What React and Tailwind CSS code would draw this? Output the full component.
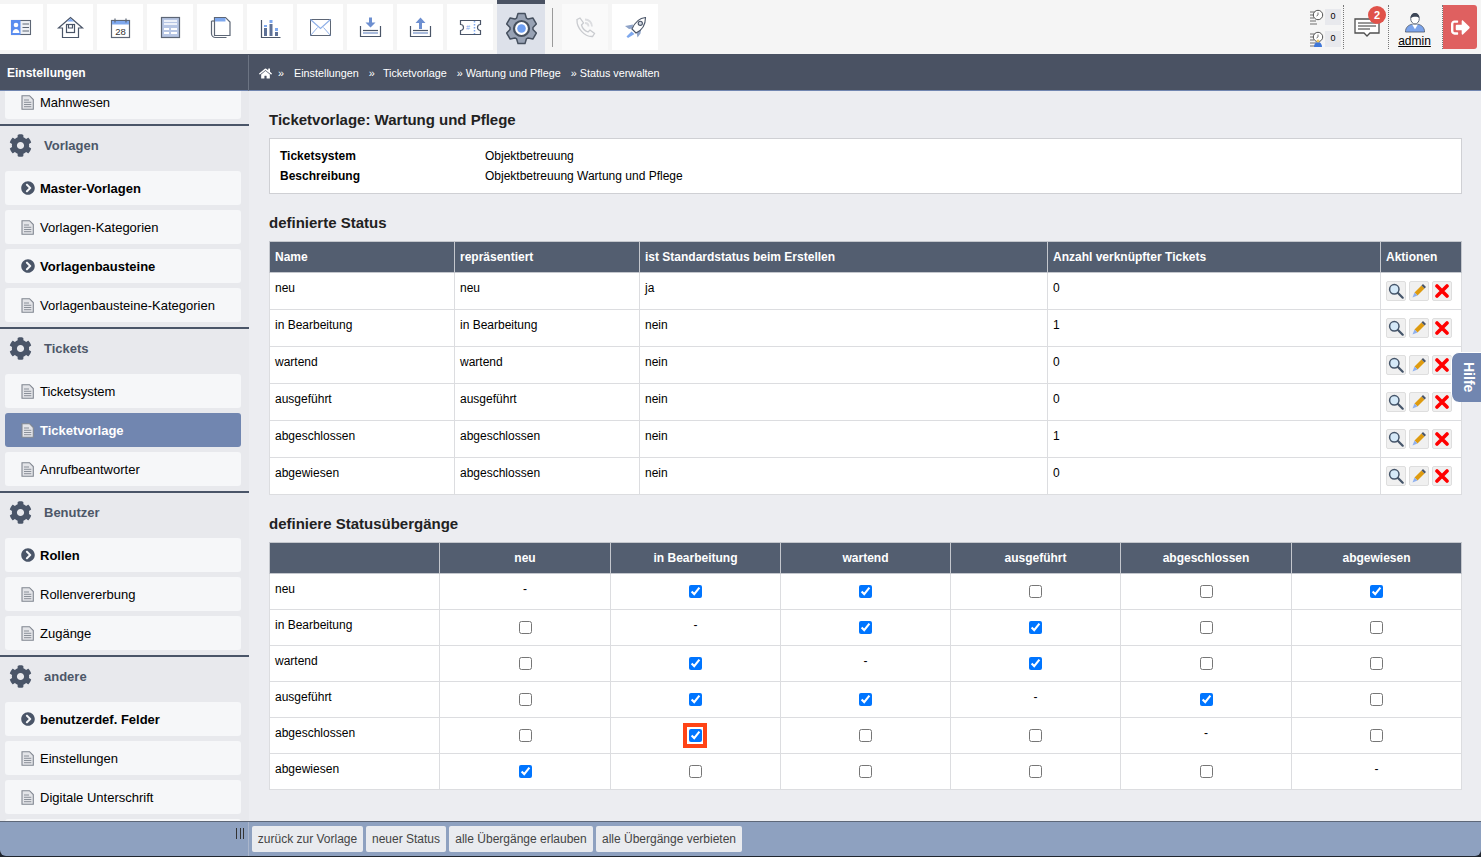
import { FaCog, FaHome, FaChevronCircleRight, FaSignOutAlt } from 'react-icons/fa';

const D = '#4a5568';
const B = '#7ea8ee';

// outline for the big settings gear, six teeth
const gearPath = () => {
  const pts = [];
  for (let k = 0; k < 6; k++) {
    const a = -90 + k * 60;
    [[a - 25, 11.5], [a - 13, 15.5], [a + 13, 15.5], [a + 25, 11.5]].forEach(([deg, r]) => {
      const t = (deg * Math.PI) / 180;
      pts.push(`${(24.5 + r * Math.cos(t)).toFixed(2)} ${(24.5 + r * Math.sin(t)).toFixed(2)}`);
    });
  }
  return `M${pts.join('L')}z`;
};

// toolbar icons
const CardIcon = () => (
  <svg width="46" height="46" viewBox="0 0 46 46" fill="none" stroke="#5d6675" strokeWidth="1.1">
    <rect x="14.500" y="16.500" width="19" height="14" fill="#eef0f4" />
    <rect x="14" y="16" width="9.500" height="15" fill="#5b8def" stroke="none" />
    <circle cx="19" cy="21" r="2.300" fill="#fff" stroke="none" />
    <path d="M15.500 29c.3-3 2-4 3.500-4s3.200 1 3.500 4z" fill="#fff" stroke="none" />
    <path d="M25.500 20h6.500M25.500 23.500h6.500M25.500 27h6.500" />
  </svg>
);
const HouseIcon = () => (
  <svg width="46" height="46" viewBox="0 0 46 46" fill="none" stroke={D} strokeWidth="1.200">
    <path d="M11.500 24L23.500 13.500 35.500 24h-4v9.500h-16V24z" fill="#fff" />
    <path d="M20 17.500l3.500-3 3.500 3z" fill={B} stroke="none" />
    <rect x="19.500" y="20.500" width="8" height="8" />
    <path d="M21.500 20.500v3.500h4v-3.500" />
  </svg>
);
const CalendarIcon = () => (
  <svg width="46" height="46" viewBox="0 0 46 46" fill="none" stroke="#5d6675" strokeWidth="1.200">
    <rect x="14.500" y="16.500" width="18" height="17" fill="#fff" />
    <rect x="15" y="17" width="17" height="3.500" fill={B} stroke="none" />
    <path d="M18 14.500v4M29 14.500v4" />
    <text x="23.500" y="30.500" textAnchor="middle" fontSize="9.500" fill="#333" stroke="none" fontFamily="Liberation Sans, sans-serif">28</text>
  </svg>
);
const FormIcon = () => (
  <svg width="46" height="46" viewBox="0 0 46 46" fill="none" stroke="#5d6675" strokeWidth="1.200">
    <rect x="14.500" y="13.500" width="18" height="20" fill="#b7c6e4" />
    <path d="M17 17h13M17 20h13" stroke="#fff" strokeWidth="1.300" />
    <path d="M17 24h5v2h-5zM24 24h6v2h-6zM17 28h5v2h-5zM24 28h6v2h-6z" fill="#fff" stroke="none" />
  </svg>
);
const CopyIcon = () => (
  <svg width="46" height="46" viewBox="0 0 46 46" fill="none" stroke="#5d6675" strokeWidth="1.200">
    <path d="M14.500 17v12.500a4 4 0 0 0 4 4h11" />
    <path d="M17.500 13.500h11l4.500 4.500v13.500h-15.500z" fill="#fff" />
    <path d="M18 14h10.500v3.500h-10.500z" fill={B} stroke="none" />
    <path d="M14.500 17h3" />
  </svg>
);
const ChartIcon = () => (
  <svg width="46" height="46" viewBox="0 0 46 46" fill="none">
    <path d="M14.500 16v17.500h19" stroke={D} strokeWidth="1.200" />
    <rect x="17" y="24" width="3" height="8" fill="#5e7196" />
    <rect x="17" y="21" width="3" height="2" fill={B} />
    <rect x="22.500" y="20" width="3" height="12" fill="#5e7196" />
    <rect x="22.500" y="16" width="3" height="3" fill={B} />
    <rect x="28" y="28" width="3" height="4" fill="#5e7196" />
    <rect x="28" y="24" width="3" height="3" fill={B} />
  </svg>
);
const MailIcon = () => (
  <svg width="46" height="46" viewBox="0 0 46 46" fill="none" stroke="#5d6675" strokeWidth="1">
    <rect x="13.500" y="15.500" width="20" height="16" fill="#fff" />
    <path d="M13.500 15.500l10 9 10-9" stroke="#8fb0e8" strokeWidth="1.200" />
    <path d="M13.500 31.500l7-8M33.500 31.500l-7-8" stroke="#8fb0e8" />
  </svg>
);
const DownloadIcon = () => (
  <svg width="46" height="46" viewBox="0 0 46 46" fill="none">
    <path d="M13.500 22v10.500h20V22" stroke={D} strokeWidth="1.200" />
    <path d="M16 26.500h15" stroke={D} strokeWidth="1.200" />
    <path d="M16 29h15" stroke="#a9bbdd" strokeWidth="2" />
    <path d="M22 13.500h3v5h3.500l-5 5-5-5H22z" fill="#6d8fd0" />
  </svg>
);
const UploadIcon = () => (
  <svg width="46" height="46" viewBox="0 0 46 46" fill="none">
    <path d="M13.500 22v10.500h20V22" stroke={D} strokeWidth="1.200" />
    <path d="M16 29h15" stroke="#a9bbdd" strokeWidth="2" />
    <path d="M16 26.500h15" stroke={D} strokeWidth="1.200" />
    <path d="M22 25v-6h-3.500l5-5.500 5 5.500H25v6z" fill="#6d8fd0" />
  </svg>
);
const TicketIcon = () => (
  <svg width="46" height="46" viewBox="0 0 46 46" fill="none" stroke={D} strokeWidth="1.200">
    <path d="M13.500 16.500h20v4a3 3 0 0 0 0 6v4h-20v-4a3 3 0 0 0 0-6z" fill="#fff" />
    <path d="M27.500 17v13" stroke={B} strokeWidth="1.500" strokeDasharray="1.500 1.500" />
    <text x="21" y="26" textAnchor="middle" fontSize="7" fontStyle="italic" fill={B} stroke="none" fontFamily="Liberation Sans, sans-serif">#</text>
  </svg>
);
const BigGear = () => (
  <svg width="48" height="50" viewBox="0 0 48 50" fill="none">
    <path d={gearPath()} fill="#98a2b4" stroke="#46505f" strokeWidth="1.500" strokeLinejoin="round" />
    <circle cx="24.500" cy="24.500" r="7.500" fill="#fff" stroke="#46505f" strokeWidth="2.200" />
    <circle cx="24.500" cy="24.500" r="4.300" fill="#6f9ff2" />
  </svg>
);
const PhoneIcon = () => (
  <svg width="46" height="46" viewBox="0 0 46 46" fill="none" stroke="#c9cbcf" strokeWidth="1.300">
    <path d="M15 15.500l3-1.500 3.500 5-2 2c.8 3 3.500 6 6.500 7l2-2 4.500 3.500-2 3c-8 .5-16-8.500-15.500-17z" />
    <path d="M23 15.500c4 0 7 3 7 7M23 19c2 0 3.500 1.500 3.500 3.500" strokeWidth="1.800" stroke="#dcdde0" />
  </svg>
);
const RocketIcon = () => (
  <svg width="46" height="46" viewBox="0 0 46 46" fill="none" stroke={D} strokeWidth="1.100">
    <path d="M21 20.500l-8 1.500 4 3 3.500-.5zM24.500 28l1 5.500 3-4 .5-4z" fill="#8ea3c8" stroke="none" />
    <path d="M33.500 13.500c-5.500.5-10.500 4.500-13.500 11.500l4 4c6.500-3 9.500-9 9.500-15.500z" fill="#fff" />
    <circle cx="28.300" cy="19.300" r="2.100" fill="#d5dbe6" />
    <path d="M19.500 27.500l3 2.500-6.500 4-1.500-1.500z" fill={B} stroke="none" />
  </svg>
);

// right side of the toolbar
const ClockStack = ({ person }) => (
  <svg width="14" height="16" viewBox="0 0 14 16" fill="none">
    <path d="M0 3h6M0 6h4M0 9h4M0 12h6M0 15h7" stroke="#9a9a9a" strokeWidth="1.500" />
    <circle cx="8" cy="6" r="4.700" fill="#fff" stroke="#555" />
    <path d="M8 3.500V6l-1.500 1" stroke="#555" strokeWidth="0.800" />
    {person && <path d="M4 16c0-3 1.500-5 4-5s4 2 4 5z" fill="#3f77d8" />}
    {person && <circle cx="8" cy="10" r="1.500" fill="#f1c75b" />}
  </svg>
);
const MessageIcon = () => (
  <svg width="26" height="20" viewBox="0 0 26 20" fill="none">
    <path d="M1 1h24v14H16l-3 3-3-3H1z" fill="#fff" stroke="#4f4f4f" strokeWidth="1.300" />
    <path d="M4 5h18M4 8h18M4 11h12" stroke="#333" strokeWidth="1" />
  </svg>
);
const UserIcon = () => (
  <svg width="22" height="21" viewBox="0 0 22 22" fill="none">
    <path d="M1 21c0-5 3-7 6-8h8c3 1 6 3 6 8z" fill="#7ba3ea" stroke="#4a5568" strokeWidth="0.800" />
    <path d="M8 13l3 5 3-5z" fill="#fff" />
    <ellipse cx="11" cy="7" rx="4.500" ry="5.500" fill="#fff" stroke="#4a5568" strokeWidth="0.900" />
    <path d="M6.500 6.500C6.500 2 9 1 11 1s4.500 1 4.500 5.500C14 4.500 9 4.500 6.500 6.500z" fill="#3d4757" />
  </svg>
);

// small icons
const DocIcon = () => (
  <svg width="13" height="15" viewBox="0 0 13 15" fill="#e3e4e8" stroke="#808690" strokeWidth="1.100">
    <path d="M1 .7h7.500L12.300 4.500v9.800H1z" />
    <path d="M3 5h5M3 7.300h7.300M3 9.500h7.300M3 11.700h7.300" strokeWidth="0.900" />
  </svg>
);
const SearchIcon = () => (
  <svg width="16" height="16" viewBox="0 0 16 16" fill="none">
    <circle cx="6.300" cy="6.300" r="4.700" fill="#d5e9f8" stroke="#45556a" strokeWidth="1.500" />
    <path d="M10 10l4.700 4.700" stroke="#45556a" strokeWidth="2.200" strokeLinecap="round" />
  </svg>
);
const PencilIcon = () => (
  <svg width="16" height="16" viewBox="0 0 16 16" fill="none">
    <path d="M3.500 9.500l7-7 3 3-7 7z" fill="#de9b10" />
    <path d="M10.500 2.500l1.500-1.500 3 3-1.500 1.500z" fill="#4a5568" />
    <path d="M3.500 9.500l3 3-5 2z" fill="#8fb0ee" />
  </svg>
);
const CrossIcon = () => (
  <svg width="14" height="14" viewBox="0 0 14 14" fill="none">
    <path d="M2 2l10 10M12 2L2 12" stroke="#f00" strokeWidth="3.600" strokeLinecap="round" />
  </svg>
);

const toolbar = [CardIcon, HouseIcon, CalendarIcon, FormIcon, CopyIcon, ChartIcon, MailIcon, DownloadIcon, UploadIcon, TicketIcon];

const sections = [
  {
    title: 'Vorlagen',
    items: [
      { label: 'Master-Vorlagen', bold: true },
      { label: 'Vorlagen-Kategorien' },
      { label: 'Vorlagenbausteine', bold: true },
      { label: 'Vorlagenbausteine-Kategorien' },
    ],
  },
  {
    title: 'Tickets',
    items: [{ label: 'Ticketsystem' }, { label: 'Ticketvorlage', active: true }, { label: 'Anrufbeantworter' }],
  },
  {
    title: 'Benutzer',
    items: [{ label: 'Rollen', bold: true }, { label: 'Rollenvererbung' }, { label: 'Zugänge' }],
  },
  {
    title: 'andere',
    items: [{ label: 'benutzerdef. Felder', bold: true }, { label: 'Einstellungen' }, { label: 'Digitale Unterschrift' }],
  },
];

const statusRows = [
  ['neu', 'neu', 'ja', '0'],
  ['in Bearbeitung', 'in Bearbeitung', 'nein', '1'],
  ['wartend', 'wartend', 'nein', '0'],
  ['ausgeführt', 'ausgeführt', 'nein', '0'],
  ['abgeschlossen', 'abgeschlossen', 'nein', '1'],
  ['abgewiesen', 'abgeschlossen', 'nein', '0'],
];

const states = ['neu', 'in Bearbeitung', 'wartend', 'ausgeführt', 'abgeschlossen', 'abgewiesen'];

// 1 = checked, 0 = unchecked, null = dash
const transitions = [
  [null, 1, 1, 0, 0, 1],
  [0, null, 1, 1, 0, 0],
  [0, 1, null, 1, 0, 0],
  [0, 1, 1, null, 1, 0],
  [0, 1, 0, 0, null, 0],
  [1, 0, 0, 0, 0, null],
];

const SideCard = ({ label, bold, active }) => (
  <div
    className={`flex items-center h-[34px] rounded-[3px] text-[13px] ${
      active ? 'bg-[#7186b0] text-white font-bold' : 'bg-[#f6f7f9] text-black'
    } ${bold ? 'font-bold' : ''}`}
  >
    <span className="w-[35px] pl-[16px] shrink-0">
      {bold ? <FaChevronCircleRight className="text-[14px] text-[#4a5568]" /> : <DocIcon />}
    </span>
    <span className="pt-[2px]">{label}</span>
  </div>
);

const Sidebar = () => (
  <aside className="w-[249px] shrink-0 bg-[#e8e9ed] overflow-hidden">
    <div className="pl-[5px] pr-[8px] pb-[5px]">
      <div className="flex items-center h-[28px] rounded-b-[3px] bg-[#f6f7f9] text-[13px] text-black pb-[6px]">
        <span className="w-[35px] pl-[16px] shrink-0">
          <DocIcon />
        </span>
        <span className="pt-[2px]">Mahnwesen</span>
      </div>
    </div>
    {sections.map((s) => (
      <section key={s.title} className="border-t-2 border-[#4a5568]">
        <div className="h-[45px] flex items-center pl-[9px] pb-[7px] text-[13px] font-bold text-[#4d5768]">
          <FaCog className="text-[23px] w-[23px] text-[#4a5568] mr-[12px]" />
          <span className="pt-[2px]">{s.title}</span>
        </div>
        <div className="flex flex-col gap-[5px] pl-[5px] pr-[8px] pb-[5px]">
          {s.items.map((item) => (
            <SideCard key={item.label} {...item} />
          ))}
        </div>
      </section>
    ))}
    <div className="ml-[5px] mr-[8px] h-[34px] rounded-[3px] bg-[#f6f7f9]" />
  </aside>
);

const ActionBtn = ({ children }) => (
  <span className="w-[20px] h-[20px] flex items-center justify-center rounded-[2px] bg-[#f0f0f0] border border-[#dedede]">{children}</span>
);

const thClass = 'bg-[#535e70] text-white text-[12px] font-bold border border-[#c4c7cd] px-[5px] align-middle';
const tdClass = 'border border-[#dcdde0] text-[12px] leading-[14px] text-black px-[5px] align-top';

const App = () => {
  return (
    <div
      className="relative h-[857px] w-[1481px] overflow-hidden flex flex-col bg-[#20262f] pb-[1px]"
      style={{ fontFamily: '"Liberation Sans", Arial, sans-serif' }}
    >
      {/* top toolbar */}
      <header className="h-[54px] shrink-0 bg-[#f5f5f5] flex">
        <div className="flex items-start ml-[-3px]">
          <div className="flex gap-[4px] pt-[4px]">
            {toolbar.map((Icon, i) => (
              <button key={i} className="w-[46px] h-[46px] bg-white block">
                <Icon />
              </button>
            ))}
          </div>
          <div className="ml-[4px] w-[48px] h-[54px] bg-[#dde1ea] border-t-4 border-[#4a5263]">
            <BigGear />
          </div>
          <div className="ml-[7px] mt-[8px] w-[1px] h-[39px] bg-[#9a9a9a]" />
          <div className="flex gap-[4px] pt-[4px] ml-[9px]">
            <button className="w-[46px] h-[46px] bg-[#fafafa] block">
              <PhoneIcon />
            </button>
            <button className="w-[46px] h-[46px] bg-white block">
              <RocketIcon />
            </button>
          </div>
        </div>
        <div className="ml-auto flex items-start pr-[4px]">
          <div className="flex flex-col gap-[6px] pt-[9px] w-[33px]">
            {[false, true].map((p) => (
              <div key={String(p)} className="flex items-center gap-[1px]">
                <ClockStack person={p} />
                <span className="w-[16px] h-[16px] bg-[#e8e9ed] text-[9px] text-black flex items-center justify-center">0</span>
              </div>
            ))}
          </div>
          <div className="mt-[5px] h-[44px] border-l border-dotted border-[#777]" />
          <div className="relative w-[44px] h-[50px] pl-[10px] pt-[18px]">
            <MessageIcon />
            <span className="absolute left-[24px] top-[6px] w-[18px] h-[18px] rounded-full bg-[#e0524a] text-white text-[11px] font-bold flex items-center justify-center">
              2
            </span>
          </div>
          <div className="mt-[5px] h-[44px] border-l border-dotted border-[#777]" />
          <a className="w-[53px] flex flex-col items-center pt-[12px] pr-[2px] text-[12px] leading-[14px] text-black underline">
            <UserIcon />
            <span className="mt-[1px]">admin</span>
          </a>
          <div className="mt-[5px] h-[44px] border-l border-dotted border-[#777]" />
          <div className="mt-[5px] w-[34px] h-[44px] bg-[#df6060] rounded-r-[3px] flex items-center justify-center text-white text-[19px]">
            <FaSignOutAlt />
          </div>
        </div>
      </header>

      {/* breadcrumb bar */}
      <div className="h-[37px] shrink-0 bg-[#4a5263] border-b border-[#7186b0] flex items-center text-white">
        <div className="w-[249px] h-full flex items-center pl-[7px] text-[12px] font-bold border-r border-[#6c7483] mt-[2px]">Einstellungen</div>
        <nav className="flex items-center text-[10.8px] pl-[10px] mt-[2px]">
          <FaHome className="text-[13px] mr-[6px]" />
          <span className="mr-[10px]">»</span>
          <span className="mr-[10px]">Einstellungen</span>
          <span className="mr-[8px]">»</span>
          <span className="mr-[10px]">Ticketvorlage</span>
          <span className="mr-[10px]">» Wartung und Pflege</span>
          <span>» Status verwalten</span>
        </nav>
      </div>

      <div className="flex flex-1 min-h-0">
        <Sidebar />
        <main className="flex-1 min-w-0 bg-[#ecedf1] pl-[20px] pr-[19px] pt-[19px]">
          <h2 className="text-[15px] font-bold text-[#222] h-[20px] leading-[20px] mb-[8px]">Ticketvorlage: Wartung und Pflege</h2>
          <div className="h-[56px] bg-white border border-[#cfd0d4] pl-[10px] pt-[7px] text-[12px] text-black leading-[20px] mb-[19px]">
            <div className="flex">
              <span className="w-[205px] font-bold">Ticketsystem</span>
              <span>Objektbetreuung</span>
            </div>
            <div className="flex">
              <span className="w-[205px] font-bold">Beschreibung</span>
              <span>Objektbetreuung Wartung und Pflege</span>
            </div>
          </div>

          <h2 className="text-[15px] font-bold text-[#222] h-[20px] leading-[20px] mb-[8px]">definierte Status</h2>
          <table className="w-[1192px] table-fixed border-collapse bg-white mb-[19px]">
            <colgroup>
              <col className="w-[185px]" />
              <col className="w-[185px]" />
              <col className="w-[408px]" />
              <col className="w-[333px]" />
              <col className="w-[81px]" />
            </colgroup>
            <thead>
              <tr className="h-[31px]">
                <th className={`${thClass} text-left`}>Name</th>
                <th className={`${thClass} text-left`}>repräsentiert</th>
                <th className={`${thClass} text-left`}>ist Standardstatus beim Erstellen</th>
                <th className={`${thClass} text-left`}>Anzahl verknüpfter Tickets</th>
                <th className={`${thClass} text-left`}>Aktionen</th>
              </tr>
            </thead>
            <tbody>
              {statusRows.map((row, i) => (
                <tr key={i} className="h-[37px]">
                  {row.map((cell, j) => (
                    <td key={j} className={`${tdClass} pt-[8px]`}>
                      {cell}
                    </td>
                  ))}
                  <td className={`${tdClass} pt-[8px]`}>
                    <div className="flex gap-[3px]">
                      <ActionBtn>
                        <SearchIcon />
                      </ActionBtn>
                      <ActionBtn>
                        <PencilIcon />
                      </ActionBtn>
                      <ActionBtn>
                        <CrossIcon />
                      </ActionBtn>
                    </div>
                  </td>
                </tr>
              ))}
            </tbody>
          </table>

          <h2 className="text-[15px] font-bold text-[#222] h-[20px] leading-[20px] mb-[8px]">definiere Statusübergänge</h2>
          <table className="w-[1192px] table-fixed border-collapse bg-white">
            <colgroup>
              <col className="w-[170px]" />
              <col className="w-[171px]" />
              <col className="w-[170px]" />
              <col className="w-[170px]" />
              <col className="w-[170px]" />
              <col className="w-[171px]" />
              <col className="w-[170px]" />
            </colgroup>
            <thead>
              <tr className="h-[31px]">
                <th className={thClass}></th>
                {states.map((s) => (
                  <th key={s} className={`${thClass} text-center`}>
                    {s}
                  </th>
                ))}
              </tr>
            </thead>
            <tbody>
              {transitions.map((row, i) => (
                <tr key={i} className="h-[36px]">
                  <td className={`${tdClass} pt-[8px]`}>{states[i]}</td>
                  {row.map((v, j) => (
                    <td key={j} className={`${tdClass} text-center ${v === null ? 'pt-[8px]' : 'pt-[11px]'}`}>
                      {v === null ? (
                        '-'
                      ) : (
                        <span className="flex justify-center">
                          <span className="relative flex">
                            <input type="checkbox" readOnly checked={v === 1} className="m-0 w-[13px] h-[13px] accent-[#0075ff]" />
                            {i === 4 && j === 1 && (
                              <span className="absolute left-[-6px] top-[-6px] w-[24px] h-[25px] border-4 border-[#ff4416]" />
                            )}
                          </span>
                        </span>
                      )}
                    </td>
                  ))}
                </tr>
              ))}
            </tbody>
          </table>
        </main>
      </div>

      {/* bottom button bar */}
      <footer className="h-[35px] shrink-0 bg-[#8ea1c0] border-t border-[#5d6778] flex items-start rounded-b-[6px]">
        <div className="w-[249px] h-full flex items-start justify-end pr-[4px] pt-[6px] border-r border-[#aab6cc] text-[#333]">
          <span className="h-[11px] w-[8px] border-x border-[#333] flex justify-center">
            <span className="w-[1px] h-full bg-[#333]" />
          </span>
        </div>
        <div className="flex gap-[3px] pl-[3px] pt-[4px] text-[12px] text-[#444]">
          <button className="h-[26px] w-[111px] bg-[#e9ebef] rounded-[2px]">zurück zur Vorlage</button>
          <button className="h-[26px] w-[80px] bg-[#e9ebef] rounded-[2px]">neuer Status</button>
          <button className="h-[26px] w-[144px] bg-[#e9ebef] rounded-[2px]">alle Übergänge erlauben</button>
          <button className="h-[26px] w-[146px] bg-[#e9ebef] rounded-[2px]">alle Übergänge verbieten</button>
        </div>
      </footer>

      {/* help tab */}
      <div
        className="absolute right-0 top-[352px] w-[30px] h-[50px] pl-[3px] bg-[#7186b0] rounded-l-[8px] border-t border-l border-white text-white text-[14px] font-bold flex items-center justify-center"
        style={{ writingMode: 'vertical-rl' }}
      >
        Hilfe
      </div>
    </div>
  );
};

export default App;
